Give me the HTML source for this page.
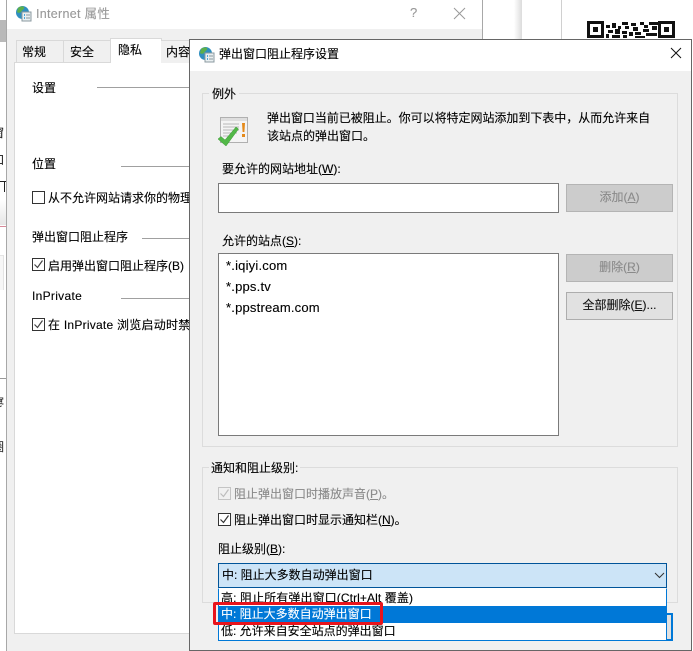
<!DOCTYPE html>
<html lang="zh"><head><meta charset="utf-8"><title>弹出窗口阻止程序设置</title>
<style>
html,body{margin:0;padding:0;background:#fff}
#p{position:relative;width:693px;height:651px;overflow:hidden;background:#fff;font-family:"Liberation Sans","Noto Sans CJK SC",sans-serif;font-size:12px;color:#000;-webkit-text-stroke:.12px}
#p div,#p svg{position:absolute;box-sizing:border-box}
.t{white-space:nowrap;line-height:16px}
.g{background:#a0a0a0;height:1px}
.cb{width:13px;height:13px;border:1px solid #333;background:#fff}
.btn{background:#cccccc;border:1px solid #b4b4b4;color:#8a8a8a;text-align:center;line-height:25px;height:28px;width:107px;left:566px}
u{text-decoration:underline}
</style></head><body><div id="p">

<div style="left:0;top:20px;width:6px;height:22px;background:#b9b9b9"></div>
<div class="t" style="left:-8px;top:125px;color:#222">窗</div>
<div class="t" style="left:-8px;top:152px;color:#222">知</div>
<div style="left:0;top:181px;width:6px;height:1px;background:#222"></div>
<div style="left:4px;top:181px;width:1px;height:11px;background:#222"></div>
<div style="left:0;top:200px;width:6px;height:25px;background:linear-gradient(#fff,#e6e6e6)"></div>
<div style="left:0;top:226px;width:6px;height:1px;background:#d88a9a"></div>
<div style="left:0;top:255px;width:4px;height:35px;background:#f7f7f7;border-top:1px solid #e4e4e4;border-right:1px solid #e4e4e4"></div>
<div style="left:0;top:378px;width:6px;height:1px;background:#999"></div>
<div class="t" style="left:-8px;top:395px;color:#333">寥</div>
<div class="t" style="left:-8px;top:439px;color:#333">圈</div>

<div style="left:514px;top:0;width:8px;height:40px;background:linear-gradient(90deg,#fff,#dcdcdc)"></div>
<div style="left:561px;top:0;width:1px;height:40px;background:#d0d0d0"></div>

<svg style="left:587px;top:21px" width="89" height="18" viewBox="0 0 89 18">
<rect x="1.500" y="1.500" width="14" height="14" fill="none" stroke="#111" stroke-width="3"/><rect x="6" y="6" width="5" height="5" fill="#111"/>
<rect x="72.500" y="1.500" width="14" height="14" fill="none" stroke="#111" stroke-width="3"/><rect x="77" y="6" width="5" height="5" fill="#111"/>
<path d="M19 4h4v3h-4zM25 2h4v5h-4zM31 5h3v3h-3zM35 1h6v3h-6zM38 5h4v3h-4zM44 2h5v3h-5zM46 6h5v4h-5zM53 1h4v3h-4zM57 4h4v3h-4zM62 1h9v3h-9zM65 5h5v4h-5zM21 9h5v3h-5zM28 8h5v5h-5zM35 10h5v3h-5zM42 11h4v4h-4zM48 11h6v3h-6zM56 8h6v3h-6zM59 12h11v3h-11zM19 13h3v4h-3zM25 14h8v3h-8zM36 14h4v3h-4zM48 15h10v2h-10z" fill="#111"/>
</svg>

<!-- back dialog -->
<div style="left:6px;top:0;width:477px;height:651px;background:#f0f0f0;border-left:1px solid #a8a8a8;border-right:1px solid #a8a8a8">
  <div style="left:0;top:0;width:475px;height:29px;background:#fff"></div>
</div>
<svg style="left:15px;top:5px" width="17" height="17" viewBox="0 0 17 17">
<circle cx="7.500" cy="7.500" r="6.500" fill="#2f8fc0"/><path d="M3 3c2-2 5-2 6-1 1 2-2 3-3 5-1 1-3 1-4 0zM9 8c2-1 4 0 4 2-1 2-3 3-4 2z" fill="#5cae4c"/>
<rect x="7" y="7" width="9" height="9" fill="#e9eff1" stroke="#8b9aa0"/><path d="M9 10h1M9 13h1" stroke="#1e8fd0" stroke-width="1.500"/><path d="M11 10h4M11 13h4" stroke="#8b9aa0"/>
</svg>
<div class="t" style="left:36px;top:6px;color:#999;font-size:12.500px;letter-spacing:.3px">Internet 属性</div>
<div class="t" style="left:410px;top:5px;color:#999;font-size:13px">?</div>
<svg style="left:453px;top:7px" width="13" height="13"><path d="M1 1l11 11M12 1L1 12" stroke="#999" fill="none"/></svg>

<!-- tabs -->
<div style="left:14px;top:62px;width:176px;height:572px;background:#fff;border:1px solid #d9d9d9;border-right:0"></div>
<div style="left:16px;top:40px;width:48px;height:23px;background:#f0f0f0;border:1px solid #d9d9d9"></div>
<div style="left:63px;top:40px;width:48px;height:23px;background:#f0f0f0;border:1px solid #d9d9d9"></div>
<div style="left:110px;top:38px;width:52px;height:25px;background:#fff;border:1px solid #d9d9d9;border-bottom:0"></div>
<div style="left:161px;top:40px;width:29px;height:23px;background:#f0f0f0;border-top:1px solid #d9d9d9"></div>
<div class="t" style="left:22px;top:44px">常规</div>
<div class="t" style="left:70px;top:44px">安全</div>
<div class="t" style="left:118px;top:42px">隐私</div>
<div class="t" style="left:166px;top:44px;width:23px;overflow:hidden">内容</div>

<div class="t" style="left:32px;top:80px">设置</div>
<div class="g" style="left:97px;top:87px;width:92px"></div>
<div class="t" style="left:32px;top:156px">位置</div>
<div class="g" style="left:121px;top:166px;width:68px"></div>
<div class="cb" style="left:32px;top:191px"></div>
<div class="t" style="left:48px;top:190px;width:141px;overflow:hidden">从不允许网站请求你的物理位置</div>
<div class="t" style="left:32px;top:229px">弹出窗口阻止程序</div>
<div class="g" style="left:142px;top:238px;width:47px"></div>
<div class="cb" style="left:32px;top:258px"></div>
<svg style="left:33px;top:259px" width="11" height="11"><path d="M1.500 5.500l3 3 5-7" stroke="#444" fill="none" stroke-width="1.200"/></svg>
<div class="t" style="left:48px;top:258px">启用弹出窗口阻止程序(B)</div>
<div class="t" style="left:32px;top:288px;letter-spacing:.3px">InPrivate</div>
<div class="g" style="left:121px;top:298px;width:68px"></div>
<div class="cb" style="left:32px;top:318px"></div>
<svg style="left:33px;top:319px" width="11" height="11"><path d="M1.500 5.500l3 3 5-7" stroke="#444" fill="none" stroke-width="1.200"/></svg>
<div class="t" style="left:48px;top:317px;width:141px;overflow:hidden;letter-spacing:.25px">在 InPrivate 浏览启动时禁用工具栏</div>

<!-- front dialog -->
<div style="left:189px;top:39px;width:503px;height:612px;background:#f0f0f0;border:1px solid #666;border-bottom:1px solid #666">
  <div style="left:0;top:0;width:501px;height:31px;background:#fff"></div>
</div>
<svg style="left:198px;top:46px" width="17" height="17" viewBox="0 0 17 17">
<circle cx="7.500" cy="7.500" r="6.500" fill="#2f8fc0"/><path d="M3 3c2-2 5-2 6-1 1 2-2 3-3 5-1 1-3 1-4 0zM9 8c2-1 4 0 4 2-1 2-3 3-4 2z" fill="#5cae4c"/>
<rect x="7" y="7" width="9" height="9" fill="#e9eff1" stroke="#8b9aa0"/><path d="M9 10h1M9 13h1" stroke="#1e8fd0" stroke-width="1.500"/><path d="M11 10h4M11 13h4" stroke="#8b9aa0"/>
</svg>
<div class="t" style="left:219px;top:46px">弹出窗口阻止程序设置</div>
<svg style="left:670px;top:47px" width="13" height="13"><path d="M1 1l10 10M11 1L1 11" stroke="#111" fill="none"/></svg>

<!-- group 1 -->
<div style="left:202px;top:93px;width:476px;height:354px;border:1px solid #dcdcdc"></div>
<div class="t" style="left:209px;top:86px;background:#f0f0f0;padding:0 3px">例外</div>
<svg style="left:218px;top:116px" width="32" height="32" viewBox="0 0 32 32">
<rect x="2.500" y="1.500" width="27" height="25" fill="#f4f4f4" stroke="#b0b0b0"/><rect x="3" y="2" width="26" height="3" fill="#dedede"/>
<path d="M5 8h16M5 11h16M5 14h16M5 17h14M5 20h10" stroke="#b8b8b8"/>
<path d="M24 7h3l-.6 9h-1.800zM24 18h3v3h-3z" fill="#e58a1a"/>
<path d="M0 23l3-2.500 4 3.500L18 11l2.500 2L8 30z" fill="#52b848" stroke="#3c9a35" stroke-width=".5"/>
</svg>
<div class="t" style="left:267px;top:110px;width:400px;letter-spacing:-.03px">弹出窗口当前已被阻止。你可以将特定网站添加到下表中，从而允许来自</div>
<div class="t" style="left:267px;top:128px">该站点的弹出窗口。</div>
<div class="t" style="left:222px;top:161px">要允许的网站地址(<u>W</u>):</div>
<div style="left:218px;top:183px;width:341px;height:30px;background:#fff;border:1px solid #7a7a7a"></div>
<div class="btn" style="top:184px">添加(<u>A</u>)</div>
<div class="t" style="left:222px;top:233px">允许的站点(<u>S</u>):</div>
<div style="left:218px;top:253px;width:341px;height:183px;background:#fff;border:1px solid #7a7a7a"></div>
<div class="t" style="left:226px;top:258px;font-size:13px;letter-spacing:.2px">*.iqiyi.com</div>
<div class="t" style="left:226px;top:279px;font-size:13px;letter-spacing:.2px">*.pps.tv</div>
<div class="t" style="left:226px;top:300px;font-size:13px;letter-spacing:.2px">*.ppstream.com</div>
<div class="btn" style="top:254px">删除(<u>R</u>)</div>
<div class="btn" style="top:292px;background:#e1e1e1;border-color:#adadad;color:#111">全部删除(<u>E</u>)...</div>

<!-- group 2 -->
<div style="left:202px;top:467px;width:476px;height:136px;border:1px solid #dcdcdc"></div>
<div class="t" style="left:209px;top:460px;background:#f0f0f0;padding:0 2px">通知和阻止级别:</div>
<div class="cb" style="left:218px;top:487px;border-color:#c4c4c4;background:#f0f0f0"></div>
<svg style="left:219px;top:488px" width="11" height="11"><path d="M1.500 5.500l3 3 5-7" stroke="#bdbdbd" fill="none" stroke-width="1.200"/></svg>
<div class="t" style="left:234px;top:486px;color:#8a8a8a">阻止弹出窗口时播放声音(<u>P</u>)。</div>
<div class="cb" style="left:218px;top:513px"></div>
<svg style="left:219px;top:514px" width="11" height="11"><path d="M1.500 5.500l3 3 5-7" stroke="#333" fill="none" stroke-width="1.200"/></svg>
<div class="t" style="left:234px;top:512px">阻止弹出窗口时显示通知栏(<u>N</u>)。</div>
<div class="t" style="left:218px;top:541px">阻止级别(<u>B</u>):</div>

<div style="left:562px;top:613px;width:111px;height:28px;border:2px solid #0078d7;background:#e1e1e1"></div>
<div style="left:218px;top:563px;width:449px;height:25px;background:#cce4f7;border:1px solid #005499"></div>
<div class="t" style="left:222px;top:567px">中: 阻止大多数自动弹出窗口</div>
<svg style="left:654px;top:572px" width="11" height="7"><path d="M1 1l4.500 4.500L10 1" stroke="#333" fill="none"/></svg>
<div style="left:218px;top:588px;width:449px;height:53px;background:#fff;border:1px solid #0078d7;border-top:1px solid #fff"></div>
<div class="t" style="left:221px;top:590px;letter-spacing:.1px">高: 阻止所有弹出窗口(Ctrl+Alt 覆盖)</div>
<div style="left:219px;top:606px;width:447px;height:17px;background:#0078d7"></div>
<div class="t" style="left:221px;top:606px;color:#fff">中: 阻止大多数自动弹出窗口</div>
<div class="t" style="left:221px;top:623px">低: 允许来自安全站点的弹出窗口</div>
<div style="left:213px;top:602px;width:170px;height:23px;border:3px solid #e8141c;border-radius:2px"></div>
</div></body></html>
